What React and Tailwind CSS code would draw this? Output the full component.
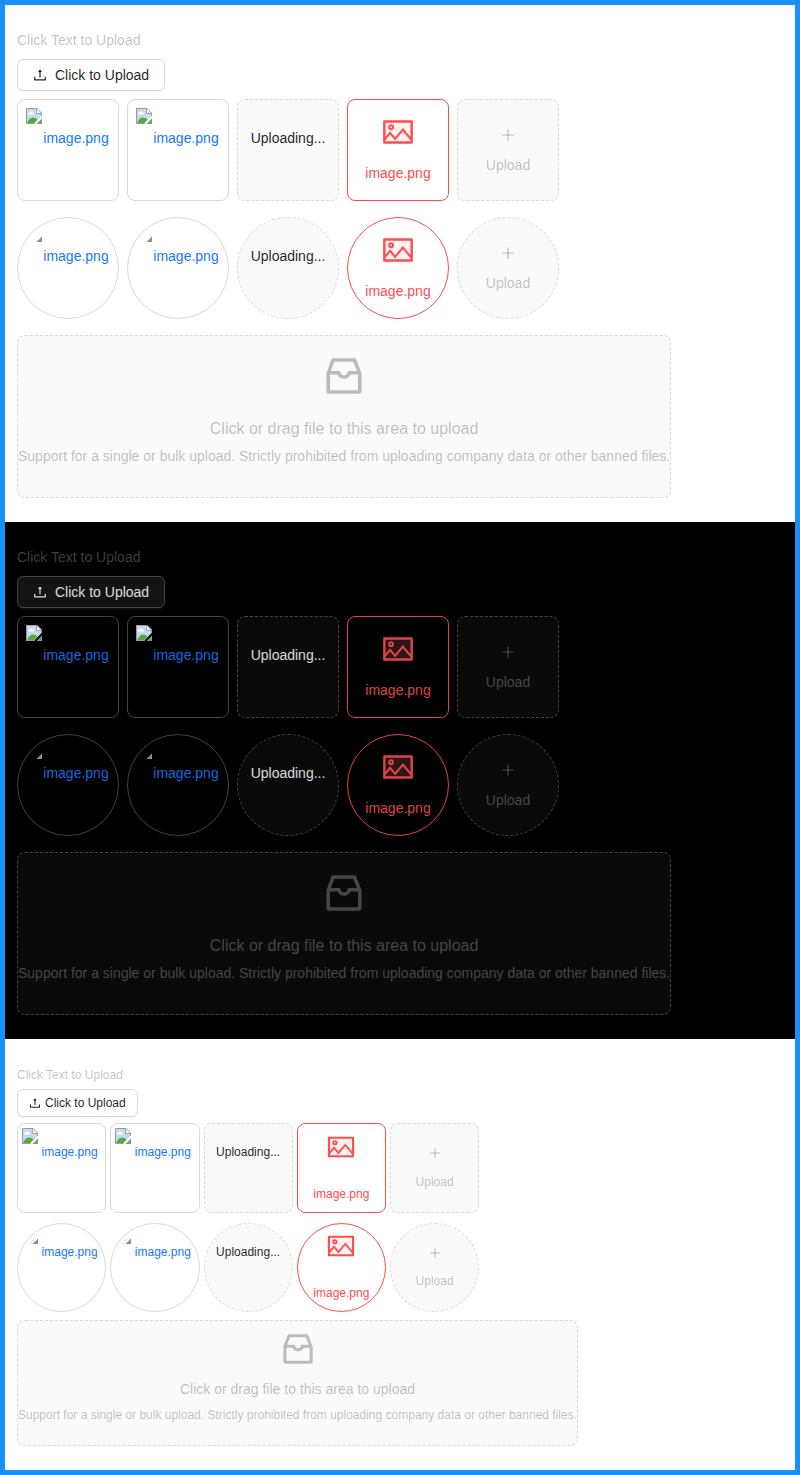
import { AiOutlineInbox } from "react-icons/ai";

const themes = {
  light: {
    section: "h-[517px] bg-white",
    muted: "text-black/25",
    text: "text-black/88",
    border: "border-[#d9d9d9]",
    button: "bg-white shadow-[0_2px_0_rgba(0,0,0,0.02)]",
    fill: "bg-black/2",
    link: "text-[#1677ff]",
    error: "text-[#ff4d4f]",
    errorBorder: "border-[#ff4d4f]",
    tone: "#fff2f0",
    compact: false,
  },
  dark: {
    section: "h-[517px] bg-black",
    muted: "text-white/25",
    text: "text-white/85",
    border: "border-[#424242]",
    button: "bg-[#141414] shadow-[0_2px_0_rgba(255,255,255,0.04)]",
    fill: "bg-white/4",
    link: "text-[#1668dc]",
    error: "text-[#dc4446]",
    errorBorder: "border-[#dc4446]",
    tone: "#2c1618",
    compact: false,
  },
};
themes.compact = { ...themes.light, section: "h-[431px] bg-white", compact: true };

function BrokenImage() {
  return (
    <svg className="h-4 w-4 shrink-0" viewBox="0 0 16 16">
      <path d="M0 0H11L16 5V7.500L8 16H0Z" fill="#c5d8f7" />
      <path d="M2 6.500C2 5 3 4.500 3.800 4.500 4.200 3 6.300 3 6.700 4.600 7.800 4.600 8 5.600 8 6.500Z" fill="#fff" />
      <path d="M1 15.200C2.500 11.500 4.600 9.500 7 9.500c1.900 0 3.300.8 4.400 2.300L8 15.200Z" fill="#55ab37" />
      <path d="M10.500 .5V5.500H15.500Z" fill="#fff" />
      <path d="M8.500 15.500H.5V.5H11" fill="none" stroke="#9b9b9b" />
      <path d="M11 .5L15.500 5V8M10.500 .5V5.500H15.500" fill="none" stroke="#9b9b9b" strokeWidth=".9" />
      <path d="M16 10.500V16H10.500Z" fill="#72a262" />
      <path d="M11 15.500H15.500V11" fill="none" stroke="#8f8f8f" />
    </svg>
  );
}

function UploadIcon({ size }) {
  return (
    <svg className={size} viewBox="64 64 896 896" fill="currentColor">
      <path d="M400 317.700h73.900V656c0 4.400 3.600 8 8 8h60c4.400 0 8-3.600 8-8V317.700H624c6.700 0 10.400-7.700 6.300-12.900L518.300 163a8 8 0 0 0-12.600 0l-112 141.700c-4.100 5.300-.4 13 6.300 13zM878 626h-60c-4.400 0-8 3.600-8 8v154H214V634c0-4.400-3.600-8-8-8h-60c-4.400 0-8 3.600-8 8v198c0 17.700 14.300 32 32 32h684c17.700 0 32-14.300 32-32V634c0-4.400-3.600-8-8-8z" />
    </svg>
  );
}

function PlusIcon({ size }) {
  return (
    <svg className={size} viewBox="64 64 896 896" fill="currentColor">
      <path d="M482 152h60q8 0 8 8v704q0 8-8 8h-60q-8 0-8-8V160q0-8 8-8z" />
      <path d="M160 474h704q8 0 8 8v60q0 8-8 8H160q-8 0-8-8v-60q0-8 8-8z" />
    </svg>
  );
}

function Picture({ tone, size }) {
  return (
    <svg className={size} viewBox="0 0 1024 1024">
      <path d="M100 196H924V828H100Z" fill={tone} />
      <path fill="currentColor" d="M928 160H96c-17.7 0-32 14.3-32 32v640c0 17.7 14.3 32 32 32h832c17.7 0 32-14.3 32-32V192c0-17.7-14.3-32-32-32zm-40 632H136v-39.900l138.500-164.300 150.100 178L658.100 489 888 761.600V792zm0-129.800L664.200 396.800c-3.200-3.800-9-3.800-12.200 0L424.600 666.400l-144-170.700c-3.200-3.800-9-3.800-12.200 0L136 652.700V232h752v430.200z" />
      <path fill="currentColor" d="M304 456a88 88 0 1 0 0-176 88 88 0 0 0 0 176zm0-116c15.500 0 28 12.500 28 28s-12.500 28-28 28-28-12.500-28-28 12.500-28 28-28z" />
    </svg>
  );
}

function Cards({ t, round }) {
  const c = t.compact;
  const shape = round ? "rounded-full" : "rounded-lg";
  const compactSize = round ? "h-[89.25px] w-[89.25px]" : "h-[90px] w-[89.25px]";
  const size = c ? compactSize : "h-[102px] w-[102px]";
  const base = `${size} ${shape} shrink-0 border`;
  const pad = c ? "p-1" : "p-2";
  const line = c ? "leading-[48px]" : "leading-[60px]";
  const compactTop = round ? "pt-[7px]" : "pt-2";
  const compactGap = round ? "mt-3 leading-5" : "mt-[13px] leading-5";
  return (
    <div className={c ? "flex gap-1" : "flex gap-2"}>
      {[0, 1].map((i) => (
        <div key={i} className={`${base} ${pad} ${t.border}`}>
          <div className={`flex h-full w-full overflow-hidden ${round ? "rounded-full" : ""} ${t.link}`}>
            <BrokenImage />
            <span className={`flex-1 text-center ${line}`}>image.png</span>
          </div>
        </div>
      ))}
      <div className={`${base} ${pad} border-dashed text-center ${t.border} ${t.fill} ${t.text} ${line}`}>
        Uploading...
      </div>
      <div className={`${base} flex flex-col items-center ${t.errorBorder} ${t.error} ${c ? compactTop : "pt-[15px]"}`}>
        <Picture tone={t.tone} size={c ? "h-[30px] w-[30px]" : "h-[34px] w-[34px]"} />
        <span className={c ? "mt-[22px] leading-5" : "mt-[13px] leading-[22px]"}>image.png</span>
      </div>
      <div className={`${base} flex flex-col items-center border-dashed ${t.border} ${t.fill} ${t.muted} ${c ? "pt-[23px]" : "pt-7"}`}>
        <PlusIcon size={c ? "h-3 w-3" : "h-3.5 w-3.5"} />
        <span className={c ? compactGap : "mt-3 leading-[22px]"}>Upload</span>
      </div>
    </div>
  );
}

function Showcase({ t }) {
  const c = t.compact;
  return (
    <section className={`flex flex-col items-start px-3 ${t.section} ${c ? "pt-[26px] text-xs" : "pt-6 text-sm"}`}>
      <span className={`${t.muted} ${c ? "leading-5" : "leading-[22px]"}`}>Click Text to Upload</span>
      <button
        className={`flex items-center rounded-md border ${t.border} ${t.button} ${t.text} ${
          c ? "mt-1 mb-1.5 h-7 gap-1 px-[11px]" : "my-2 h-8 gap-2 px-[15px]"
        }`}
      >
        <UploadIcon size={c ? "h-3 w-3" : "h-3.5 w-3.5"} />
        <span>Click to Upload</span>
      </button>
      <div className={c ? "mb-2 flex flex-col gap-[9.75px]" : "mb-4 flex flex-col gap-4"}>
        <Cards t={t} />
        <Cards t={t} round />
      </div>
      <div
        className={`flex flex-col items-center rounded-lg border border-dashed whitespace-nowrap ${t.border} ${t.fill} ${t.muted} ${
          c ? "h-[126px] pt-2" : "h-[163px] pt-4"
        }`}
      >
        <AiOutlineInbox className={c ? "h-10 w-10" : "h-12 w-12"} />
        <p className={c ? "mt-[9px] text-sm leading-[22px]" : "mt-[17px] text-base leading-6"}>
          Click or drag file to this area to upload
        </p>
        <p className={c ? "mt-[5px] leading-5" : "mt-1 leading-[22px]"}>
          Support for a single or bulk upload. Strictly prohibited from uploading company data or other banned files.
        </p>
      </div>
    </section>
  );
}

export default function App() {
  return (
    <main className="h-[1475px] w-[800px] overflow-hidden border-[5px] border-[#1890ff] font-['Liberation_Sans',sans-serif]">
      <Showcase t={themes.light} />
      <Showcase t={themes.dark} />
      <Showcase t={themes.compact} />
    </main>
  );
}
